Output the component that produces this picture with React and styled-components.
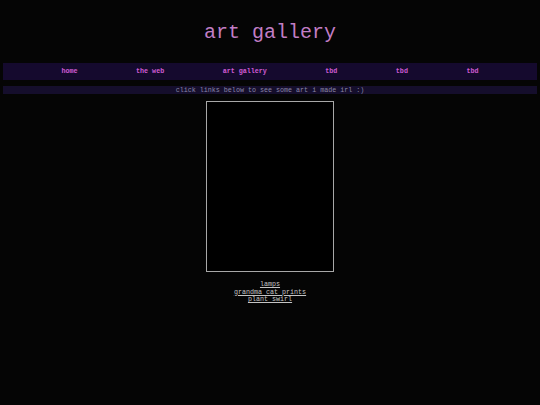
import React from 'react';
import styled, { createGlobalStyle } from 'styled-components';

const GlobalStyle = createGlobalStyle`
    html, body {
        margin: 0;
        padding: 0;
        background: #050505;
    }
    body {
        font-family: "Liberation Mono", "Courier New", monospace;
    }
`;

const Page = styled.div`
    display: flex;
    flex-direction: column;
    align-items: stretch;
    padding: 0 3px;
    min-height: 405px;
`;

const Title = styled.h1`
    margin: 20px 0 0;
    height: 26px;
    line-height: 26px;
    text-align: center;
    font-weight: normal;
    font-size: 20px;
    color: #c27ec6;
`;

const NavBar = styled.nav`
    margin-top: 17px;
    height: 17px;
    background: #150a2e;
    display: flex;
    justify-content: space-evenly;
    align-items: center;
    padding-bottom: 1px;
    box-sizing: border-box;
`;

const NavLink = styled.a`
    font-size: 6.7px;
    font-weight: bold;
    color: #d05cd4;
    text-decoration: none;
`;

const Notice = styled.div`
    margin-top: 6px;
    height: 8px;
    line-height: 8px;
    background: #150e2c;
    text-align: center;
    font-size: 6.7px;
    color: #8a86a6;
`;

const Frame = styled.div`
    margin: 7px auto 0;
    width: 126px;
    height: 169px;
    border: 1px solid #a8a8a8;
    background: #000;
`;

const LinkList = styled.div`
    margin-top: 9px;
    display: flex;
    flex-direction: column;
    align-items: center;
`;

const ArtLink = styled.a`
    font-size: 6.7px;
    line-height: 7.5px;
    color: #c4c4c4;
    text-decoration: underline;

    &:visited {
        color: #c4c4c4;
    }
`;

const navItems = ['home', 'the web', 'art gallery', 'tbd', 'tbd', 'tbd'];
const artworks = ['lamps', 'grandma cat prints', 'plant swirl'];

function App() {
    return (
        <>
            <GlobalStyle />
            <Page>
                <Title>art gallery</Title>
                <NavBar>
                    {navItems.map((item, i) => (
                        <NavLink key={i} href="#">{item}</NavLink>
                    ))}
                </NavBar>
                <Notice>click links below to see some art i made irl :)</Notice>
                <Frame />
                <LinkList>
                    {artworks.map((art) => (
                        <ArtLink key={art} href="#">{art}</ArtLink>
                    ))}
                </LinkList>
            </Page>
        </>
    );
}

export default App;
